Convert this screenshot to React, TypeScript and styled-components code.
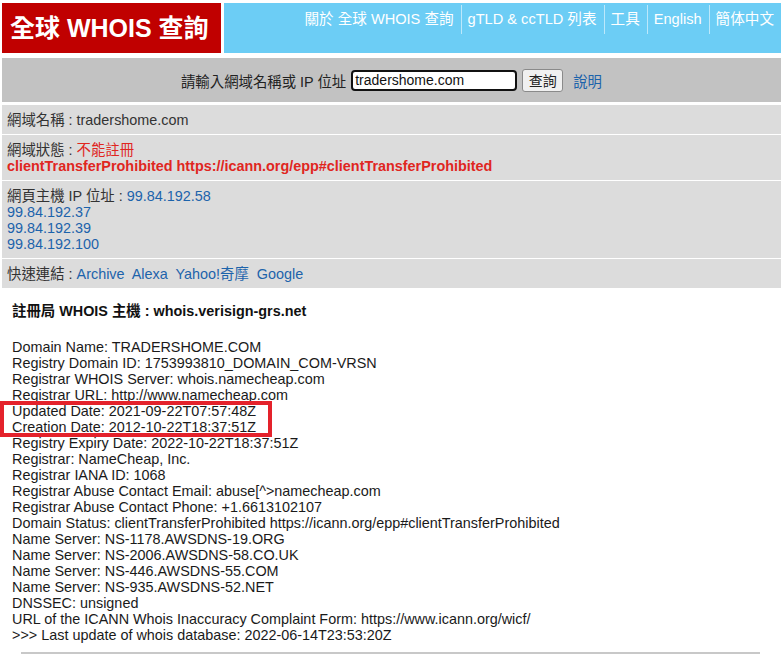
import React from 'react'
import styled, { createGlobalStyle } from 'styled-components'

const FONT = '"Liberation Sans", Arial, "Noto Sans CJK TC", sans-serif'

const GlobalStyle = createGlobalStyle`
  body {
    margin: 0;
    background: #fff;
    font-family: ${FONT};
    font-size: 14.4px;
    color: #222;
  }
`

const navItems = ['關於 全球 WHOIS 查詢', 'gTLD & ccTLD 列表', '工具', 'English', '簡体中文']

const whoisLines = [
  'Domain Name: TRADERSHOME.COM',
  'Registry Domain ID: 1753993810_DOMAIN_COM-VRSN',
  'Registrar WHOIS Server: whois.namecheap.com',
  'Registrar URL: http://www.namecheap.com'
]

const highlighted = [
  'Updated Date: 2021-09-22T07:57:48Z',
  'Creation Date: 2012-10-22T18:37:51Z'
]

const restLines = [
  'Registry Expiry Date: 2022-10-22T18:37:51Z',
  'Registrar: NameCheap, Inc.',
  'Registrar IANA ID: 1068',
  'Registrar Abuse Contact Email: abuse[^>namecheap.com',
  'Registrar Abuse Contact Phone: +1.6613102107',
  'Domain Status: clientTransferProhibited https://icann.org/epp#clientTransferProhibited',
  'Name Server: NS-1178.AWSDNS-19.ORG',
  'Name Server: NS-2006.AWSDNS-58.CO.UK',
  'Name Server: NS-446.AWSDNS-55.COM',
  'Name Server: NS-935.AWSDNS-52.NET',
  'DNSSEC: unsigned',
  'URL of the ICANN Whois Inaccuracy Complaint Form: https://www.icann.org/wicf/',
  '>>> Last update of whois database: 2022-06-14T23:53:20Z'
]

const App = () => {
  return (
    <Page>
      <GlobalStyle />
      <Header>
        <Logo>全球 WHOIS 查詢</Logo>
        <Nav>
          {navItems.map((item, i) => (
            <NavItem key={item} first={i === 0}>
              {item}
            </NavItem>
          ))}
        </Nav>
      </Header>

      <SearchBar>
        <label>請輸入網域名稱或 IP 位址</label>
        <SearchInput defaultValue="tradershome.com" />
        <SearchButton>查詢</SearchButton>
        <Link>說明</Link>
      </SearchBar>

      <InfoRow>網域名稱 : tradershome.com</InfoRow>
      <InfoRow>
        網域狀態 : <Red>不能註冊</Red>
        <br />
        <RedBold>clientTransferProhibited https://icann.org/epp#clientTransferProhibited</RedBold>
      </InfoRow>
      <InfoRow>
        網頁主機 IP 位址 : <Link>99.84.192.58</Link>
        <br />
        <Link>99.84.192.37</Link>
        <br />
        <Link>99.84.192.39</Link>
        <br />
        <Link>99.84.192.100</Link>
      </InfoRow>
      <InfoRow>
        快速連結 : <Link>Archive</Link>&nbsp; <Link>Alexa</Link>&nbsp; <Link>Yahoo!奇摩</Link>&nbsp;{' '}
        <Link>Google</Link>
      </InfoRow>

      <Whois>
        <WhoisServer>
          註冊局 WHOIS 主機 : whois.verisign-grs.net
        </WhoisServer>
        <WhoisBody>
          {whoisLines.map((l) => (
            <div key={l}>{l}</div>
          ))}
          <Marked>
            {highlighted.map((l) => (
              <div key={l}>{l}</div>
            ))}
          </Marked>
          {restLines.map((l) => (
            <div key={l}>{l}</div>
          ))}
        </WhoisBody>
        <Rule />
      </Whois>
    </Page>
  )
}
export default App

const Page = styled.div`
  padding: 3px 3px 0 2px;
`

const Header = styled.div`
  display: flex;
  gap: 3px;
  height: 50px;
`

const Logo = styled.div`
  width: 219px;
  background: #c00000;
  color: #fff;
  font-family: "Liberation Sans", Arial, "Noto Sans CJK TC", sans-serif;
  font-weight: bold;
  font-size: 25px;
  line-height: 50px;
  padding-left: 8px;
  box-sizing: border-box;
  white-space: nowrap;
  overflow: hidden;
`

const Nav = styled.div`
  flex: 1;
  background: #6ccdf5;
  display: flex;
  justify-content: flex-end;
  align-items: flex-start;
  padding: 2px 0 0 0;
`

const NavItem = styled.div<{ first?: boolean }>`
  color: #fff;
  font-size: 14.6px;
  line-height: 29px;
  padding: 0 7px 0 6px;
  border-left: ${(p) => (p.first ? 'none' : '1px solid rgba(255, 255, 255, 0.55)')};
  white-space: nowrap;
`

const SearchBar = styled.div`
  margin-top: 5px;
  height: 44px;
  background: #c2c2c2;
  display: flex;
  align-items: center;
  justify-content: center;
  color: #222;
  padding-left: 0;

  label {
    margin-right: 5px;
  }
`

const SearchInput = styled.input`
  width: 166px;
  height: 21px;
  box-sizing: border-box;
  border: 2px solid #111;
  border-radius: 4px;
  padding: 0 2px;
  font-family: ${FONT};
  font-size: 14px;
  color: #111;
  background: #fff;
`

const SearchButton = styled.button`
  margin-left: 5px;
  width: 41px;
  height: 23px;
  border: 1px solid #8a8a8a;
  border-radius: 3px;
  background: #f0f0f0;
  font-family: ${FONT};
  font-size: 14px;
  color: #222;
  padding: 0;
`

const Link = styled.a`
  color: #1c63ab;
  cursor: pointer;

  ${SearchBar} & {
    margin-left: 10px;
  }
`

const InfoRow = styled.div`
  margin-top: 3px;
  & + & {
    margin-top: 1px;
  }
  background: #dcdcdc;
  padding: 7px 5px 6px 5px;
  line-height: 16px;
  color: #333;
`

const Red = styled.span`
  color: #e0261f;
`

const RedBold = styled.span`
  color: #e0261f;
  font-weight: bold;
`

const Whois = styled.div`
  padding: 15px 0 0 10px;
  color: #1a1a1a;
`

const WhoisServer = styled.div`
  font-weight: bold;
  line-height: 16px;
  color: #111;
`

const WhoisBody = styled.div`
  margin-top: 20px;
  line-height: 16px;
`

const Marked = styled.div`
  position: relative;

  &::after {
    content: '';
    position: absolute;
    left: -12px;
    top: -2px;
    width: 272px;
    height: 36px;
    box-sizing: border-box;
    border: 4px solid #e4222b;
  }
`

const Rule = styled.div`
  margin: 9px 21px 0 9px;
  border-top: 2px solid #c8c8c8;
`
